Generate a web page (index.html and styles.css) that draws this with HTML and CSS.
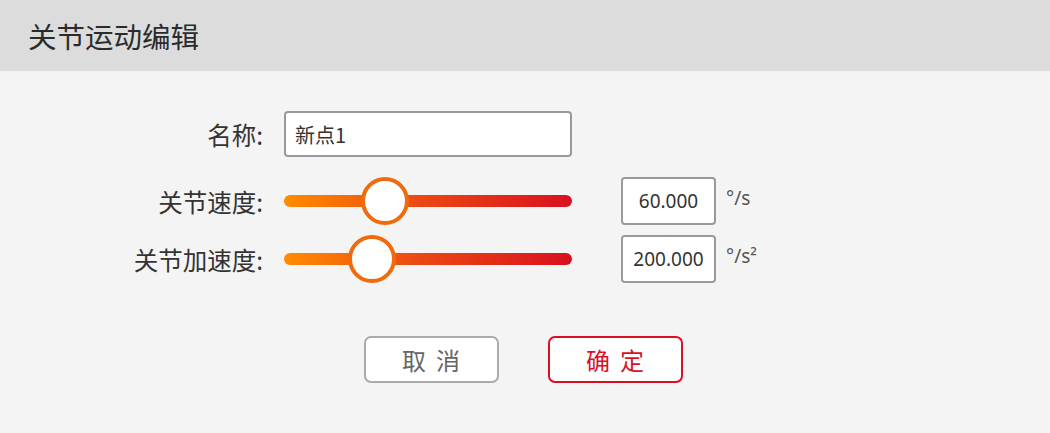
FILE: index.html
```html
<!DOCTYPE html>
<html lang="zh-CN">
<head>
  <meta charset="UTF-8" />
  <title>关节运动编辑</title>
  <link rel="stylesheet" href="styles.css">
</head>
<body>
  <header class="title-bar">关节运动编辑</header>

  <form class="editor">
    <div class="row">
      <label class="label">名称:</label>
      <input class="name-input" type="text" value="新点1" />
    </div>

    <div class="row row-slider">
      <label class="label">关节速度:</label>
      <div class="slider">
        <div class="track"></div>
        <div class="thumb" style="--pos: 0.32"></div>
      </div>
      <div class="value">60.000</div>
      <span class="unit">°/s</span>
    </div>

    <div class="row row-slider tight">
      <label class="label">关节加速度:</label>
      <div class="slider">
        <div class="track"></div>
        <div class="thumb" style="--pos: 0.267"></div>
      </div>
      <div class="value">200.000</div>
      <span class="unit">°/s²</span>
    </div>

    <div class="actions">
      <button type="button" class="btn btn-cancel">取消</button>
      <button type="button" class="btn btn-ok">确定</button>
    </div>
  </form>
</body>
</html>
```

FILE: styles.css
```css
:root {
  --text: #333;
  --border: #9a9a9a;
  --red: #d8101f;
}

body {
  margin: 0;
  background: #f4f4f4;
  font-family: "Noto Sans", "Noto Sans CJK SC", sans-serif;
  color: var(--text);
}

.title-bar {
  height: 71px;
  line-height: 71px;
  padding-left: 28px;
  background: #dcdcdc;
  font-family: "Noto Sans CJK SC", sans-serif;
  font-size: 28.5px;
  color: #2b2b2b;
}

.editor {
  padding-top: 40px;
}

.row {
  display: flex;
  align-items: center;
  height: 46px;
}

.row-slider {
  height: 48px;
  margin-top: 20px;
}

.row-slider.tight {
  margin-top: 10px;
}

.label {
  width: 263px;
  margin-right: 21px;
  text-align: right;
  font-family: "Noto Sans CJK SC", sans-serif;
  font-size: 24.5px;
  color: #333;
}

.name-input {
  box-sizing: border-box;
  width: 288px;
  height: 46px;
  margin: 0;
  padding: 0 9px;
  border: 2px solid var(--border);
  border-radius: 4px;
  background: #fff;
  font-family: "Noto Sans CJK SC", sans-serif;
  font-size: 20px;
  color: #333;
  outline: none;
}

/* slider drawn by hand */
.slider {
  position: relative;
  width: 288px;
  height: 48px;
}

.track {
  position: absolute;
  left: 0;
  right: 0;
  top: 18px;
  height: 12px;
  border-radius: 6px;
  background: linear-gradient(90deg, #ff8c00, #ec4a12 45%, #d9101f);
}

.thumb {
  position: absolute;
  top: 0;
  left: calc(var(--pos) * (100% - 48px));
  box-sizing: border-box;
  width: 48px;
  height: 48px;
  border: 4px solid #f06a0e;
  border-radius: 50%;
  background: #fff;
}

.value {
  box-sizing: border-box;
  width: 95px;
  height: 100%;
  margin-left: 49px;
  border: 2px solid var(--border);
  border-radius: 4px;
  background: #fff;
  display: flex;
  align-items: center;
  justify-content: center;
  font-size: 19px;
  color: #333;
}

.unit {
  margin-left: 10px;
  margin-top: -6px;
  font-size: 19px;
  color: #555;
}

.actions {
  display: flex;
  justify-content: center;
  gap: 49px;
  margin-top: 53px;
  padding-right: 4px;
}

.btn {
  box-sizing: border-box;
  width: 135px;
  height: 47px;
  border-radius: 7px;
  background: #fff;
  font-family: "Noto Sans CJK SC", sans-serif;
  font-size: 24px;
  letter-spacing: 10px;
  padding: 0 0 0 10px;
  cursor: pointer;
}

.btn-cancel {
  border: 2px solid #ababab;
  color: #666;
}

.btn-ok {
  border: 2px solid var(--red);
  color: var(--red);
}
```
